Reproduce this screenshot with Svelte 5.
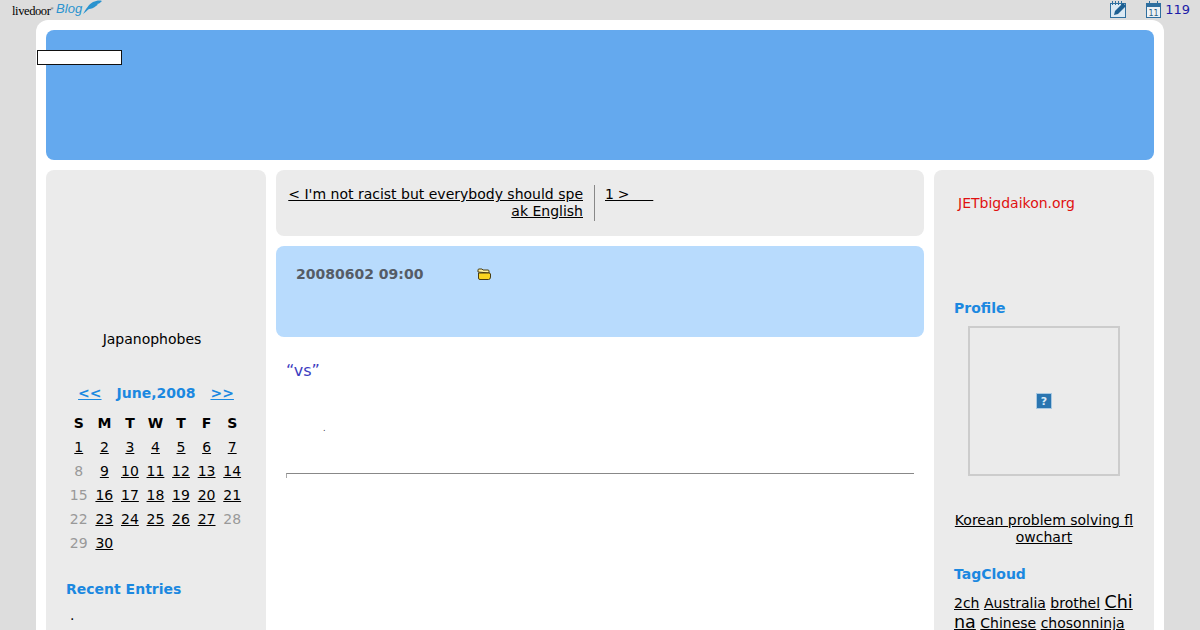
<script>
  const weeks = [
    [1, 2, 3, 4, 5, 6, 7],
    [8, 9, 10, 11, 12, 13, 14],
    [15, 16, 17, 18, 19, 20, 21],
    [22, 23, 24, 25, 26, 27, 28],
    [29, 30]
  ];
  const empty = [8, 15, 22, 28, 29];
  const days = ['S', 'M', 'T', 'W', 'T', 'F', 'S'];
</script>

<div class="topbar">
  <a class="logo" href="#top">
    <span class="ld">livedoor<sup>®</sup></span>
    <span class="blog">Blog</span>
    <svg width="19" height="14" viewBox="0 0 19 14">
      <path d="M0 14 C3 9 6 4 10 2 C13 1 16 0 19 1 C17 3 16 4 14 4 C15 4 15 5 13 6 C11 8 8 9 6 9 C4 10 3 12 0 14 Z" fill="#2a93cf" />
    </svg>
  </a>
  <div class="tools">
    <svg width="18" height="17" viewBox="0 0 18 17">
      <rect x="0.5" y="2.5" width="15" height="14" fill="#dbe9f3" stroke="#2f6f9f" />
      <path d="M2.5 0v4M5.5 0v4M8.5 0v4M11.5 0v4" stroke="#2f6f9f" />
      <path d="M4 14l1-4 8-8 3 3-8 8z" fill="#1d5f92" />
    </svg>
    <svg class="cal" width="17" height="17" viewBox="0 0 17 17">
      <rect x="1.5" y="2.5" width="14" height="14" fill="#eef2f5" stroke="#2f6f9f" />
      <rect x="1" y="2" width="15" height="4" fill="#2f6f9f" />
      <path d="M4.5 0v3M12.5 0v3" stroke="#2f6f9f" />
      <text x="8.5" y="14.5" text-anchor="middle" class="calnum">11</text>
    </svg>
    <span class="count">119</span>
  </div>
</div>

<div class="wrap">
  <a class="skip" href="#top" aria-label="skip"></a>
  <header class="banner"></header>
  <div class="cols">
    <aside class="side left">
      <p class="owner">Japanophobes</p>
      <div class="calhead">
        <a href="#top">&lt;&lt;</a>
        <span>June,2008</span>
        <a href="#top">&gt;&gt;</a>
      </div>
      <table>
        <thead>
          <tr>{#each days as d}<th>{d}</th>{/each}</tr>
        </thead>
        <tbody>
          {#each weeks as w}
            <tr>
              {#each w as n}
                <td>
                  {#if empty.includes(n)}<span class="off">{n}</span>{:else}<a href="#top">{n}</a>{/if}
                </td>
              {/each}
            </tr>
          {/each}
        </tbody>
      </table>
      <h3 class="recent">Recent Entries</h3>
      <p class="dot">.</p>
    </aside>

    <main class="center">
      <nav class="pager">
        <a class="prev" href="#top">&lt; I'm not racist but everybody should spe ak English</a>
        <div class="next"><a href="#top">1 &gt; &nbsp; &nbsp; &nbsp;</a></div>
      </nav>
      <div class="meta">
        <b>20080602 09:00</b>
        <svg width="14" height="12" viewBox="0 0 14 12">
          <path d="M1 4V2q0-1 1-1h3l1 1h5q1 0 1 1v2z" fill="#fff2a0" stroke="#4a3c10" />
          <path d="M1.5 10V5h10q2 0 2 1v3q0 2.500-2 2.500H3q-1.500 0-1.500-1.500z" fill="#fbd520" stroke="#4a3c10" />
        </svg>
      </div>
      <article>
        <h2>“vs”</h2>
        <p class="tick">.</p>
        <div class="rule"></div>
      </article>
    </main>

    <aside class="side right">
      <p class="site">JETbigdaikon.org</p>
      <h3 class="profile">Profile</h3>
      <div class="photo">
        <svg width="16" height="16" viewBox="0 0 16 16">
          <rect x="0.5" y="0.5" width="15" height="15" fill="#2a75b0" stroke="#a9c9e2" />
          <text x="8" y="12" text-anchor="middle" class="q">?</text>
        </svg>
      </div>
      <a class="chart" href="#top">Korean problem solving fl owchart</a>
      <h3 class="tags">TagCloud</h3>
      <p class="cloud">
        <a href="#top">2ch</a> <a href="#top">Australia</a> <a href="#top">brothel</a>
        <a class="big" href="#top">China</a> <a href="#top">Chinese</a> <a href="#top">chosonninja</a>
      </p>
    </aside>
  </div>
</div>

<style>
  :global(body) {
    background: #dddddd;
    font-family: "DejaVu Sans", sans-serif;
    font-size: 14px;
    color: #000;
    overflow: hidden;
  }

  a {
    color: #000;
  }

  h3 {
    margin: 0;
    font-size: 14px;
    color: #1b88e0;
  }

  .topbar {
    height: 20px;
    display: flex;
    justify-content: space-between;
    align-items: flex-start;
    padding: 0 10px 0 12px;
  }

  .logo {
    display: flex;
    align-items: flex-start;
    text-decoration: none;
    height: 18px;
  }

  .ld {
    font-family: "Liberation Serif", serif;
    font-size: 12.5px;
    line-height: 17px;
    letter-spacing: -0.4px;
  }

  .ld sup {
    font-size: 4px;
  }

  .blog {
    margin-left: 3px;
    font-family: "Liberation Sans", sans-serif;
    font-style: italic;
    font-size: 13px;
    line-height: 17px;
    color: #2a93cf;
  }

  .logo svg {
    margin-left: 1px;
  }

  .tools {
    display: flex;
    align-items: flex-start;
    padding-top: 1px;
    color: #1c1ca8;
    font-size: 13px;
    line-height: 17px;
  }

  .cal {
    margin-left: 17px;
  }

  .calnum {
    font-size: 8px;
    fill: #2f5f80;
  }

  .count {
    margin-left: 3px;
  }

  .wrap {
    position: relative;
    width: 1108px;
    height: 590px;
    margin: 0 0 0 36px;
    padding: 10px;
    background: #fff;
    border-radius: 12px 12px 0 0;
    overflow: hidden;
    display: flex;
    flex-direction: column;
    gap: 10px;
  }

  .skip {
    position: absolute;
    left: 1px;
    top: 30px;
    width: 83px;
    height: 13px;
    background: #fff;
    border: 1px solid #111;
    z-index: 2;
  }

  .banner {
    height: 130px;
    flex: none;
    background: #64a9ee;
    border-radius: 8px;
  }

  .cols {
    display: grid;
    grid-template-columns: 220px 648px 220px;
    gap: 10px;
    flex: 1;
  }

  .side {
    background: #ebebeb;
    border-radius: 8px 8px 0 0;
    padding: 0 20px;
  }

  .owner {
    margin: 160px 0 0;
    line-height: 18px;
    text-align: center;
    padding-right: 8px;
  }

  .calhead {
    margin-top: 36px;
    display: flex;
    justify-content: center;
    gap: 15px;
    font-weight: bold;
    color: #1b88e0;
    line-height: 18px;
  }

  .calhead a {
    color: #1b88e0;
  }

  table {
    margin-top: 9px;
    border-collapse: collapse;
    width: 179px;
  }

  th,
  td {
    height: 24px;
    padding: 0;
    text-align: center;
  }

  .off {
    color: #999;
  }

  .recent {
    margin-top: 25px;
    line-height: 18px;
  }

  .dot {
    margin: 8px 0 0 4px;
    line-height: 18px;
  }

  .center {
    display: flex;
    flex-direction: column;
  }

  .pager {
    height: 66px;
    flex: none;
    box-sizing: border-box;
    background: #ebebeb;
    border-radius: 8px;
    display: flex;
    align-items: flex-start;
    padding: 15px 0 0;
    line-height: 17px;
  }

  .prev {
    width: 296px;
    margin-left: 11px;
    padding-top: 1px;
    text-align: right;
    word-break: break-all;
  }

  .next {
    margin-left: 11px;
    padding: 1px 0 16px 10px;
    border-left: 1px solid #888;
    height: 19px;
    word-spacing: -0.5px;
  }

  .meta {
    margin-top: 10px;
    height: 91px;
    flex: none;
    box-sizing: border-box;
    background: #b8dbfd;
    border-radius: 8px;
    padding: 19px 20px 0;
    display: flex;
    align-items: flex-start;
    color: #555c66;
    line-height: 18px;
  }

  .meta svg {
    margin: 3px 0 0 54px;
  }

  article {
    padding: 0 10px;
  }

  h2 {
    margin: 24px 0 0;
    font-weight: normal;
    font-size: 16px;
    line-height: 20px;
    color: #3c3cc0;
  }

  .tick {
    margin: 38px 0 0 37px;
    font-size: 8px;
    line-height: 20px;
    color: #333;
  }

  .rule {
    margin-top: 34px;
    height: 4px;
    border-top: 1px solid #888;
    border-left: 1px solid #aaa;
  }

  .site {
    margin: 24px 0 0 4px;
    line-height: 18px;
    color: #e01010;
  }

  .profile {
    margin-top: 87px;
    line-height: 18px;
  }

  .photo {
    width: 148px;
    height: 146px;
    margin: 9px 0 0 14px;
    border: 2px solid #ccc;
    display: flex;
    align-items: center;
    justify-content: center;
  }

  .q {
    font-size: 11px;
    font-weight: bold;
    fill: #dcebf7;
  }

  .chart {
    display: block;
    margin-top: 36px;
    line-height: 17px;
    text-align: center;
    word-break: break-all;
  }

  .tags {
    margin-top: 19px;
    line-height: 18px;
  }

  .cloud {
    margin: 10px 0 0;
    line-height: 19px;
    word-break: break-all;
  }

  .big {
    font-size: 17.5px;
  }
</style>
